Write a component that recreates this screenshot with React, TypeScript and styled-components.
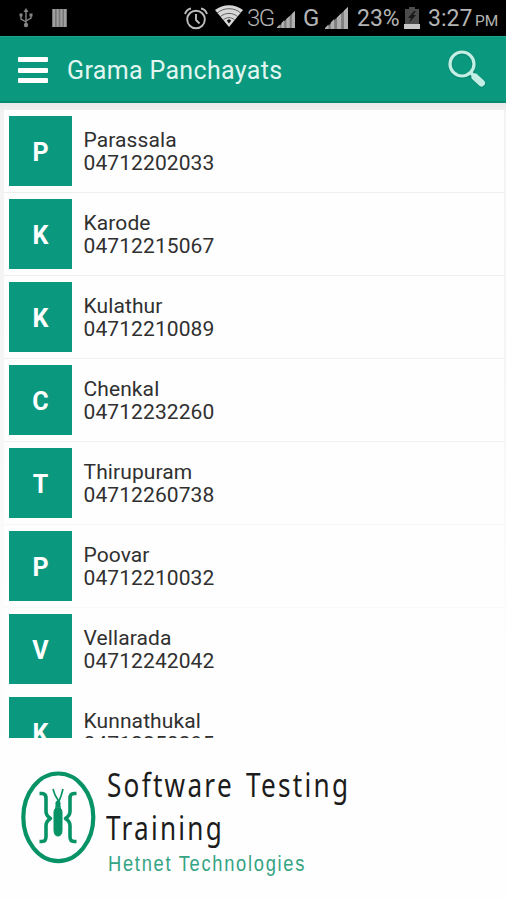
import React from 'react';
import styled, { createGlobalStyle } from 'styled-components';

const GREEN = '#0a997f';

const GlobalStyle = createGlobalStyle`
  * { box-sizing: border-box; }
  body { margin: 0; background: #fefefe; font-family: Roboto, sans-serif; }
  svg { display: block; flex: none; }
`;

const Screen = styled.main`
  width: 506px;
  height: 900px;
  overflow: hidden;
  display: flex;
  flex-direction: column;
  background: #fefefe;
`;

const StatusBar = styled.div`
  height: 36px;
  flex: none;
  display: flex;
  align-items: center;
  background: #000;
  color: #b4b4b4;
`;

const StatusItem = styled.span<{ $width: number; $gap: number; $size?: number; $light?: boolean; $drop?: number; $tracking?: number }>`
  flex: none;
  width: ${p => p.$width}px;
  margin-left: ${p => p.$gap}px;
  margin-top: ${p => p.$drop ?? 0}px;
  font-size: ${p => p.$size ?? 24}px;
  font-weight: ${p => (p.$light ? 300 : 400)};
  letter-spacing: ${p => p.$tracking ?? 0}px;
  line-height: 36px;
  white-space: nowrap;
`;

const AppBar = styled.header`
  height: 67px;
  flex: none;
  display: flex;
  align-items: center;
  padding: 2px 19px 0 18px;
  background: ${GREEN};
  border-top: 1px solid #16a68d;
  border-bottom: 2px solid #078970;
`;

const MenuButton = styled.button`
  width: 30px;
  height: 26px;
  padding: 0;
  border: 0;
  background: none;
  display: flex;
  flex-direction: column;
  justify-content: space-between;
`;

const MenuLine = styled.span`
  height: 5px;
  width: 30px;
  border-radius: 1px;
  background: #fff;
`;

const Title = styled.h1`
  margin: 1px auto 0 19px;
  font-size: 25px;
  font-weight: 400;
  letter-spacing: 0.35px;
  color: #e2f6f1;
`;

const ListPane = styled.section`
  height: 635px;
  flex: none;
  overflow: hidden;
  padding: 7px 2px 0 4px;
  background: linear-gradient(#e9e9e9 0, #f3f3f3 12px, #f4f4f4 220px, #fdfdfd 540px);
`;

const Row = styled.article<{ $divider: string }>`
  height: 83px;
  display: flex;
  align-items: flex-start;
  padding: 6px 5px 0;
  background: #fefefe;
  border-bottom: 1px solid ${p => p.$divider};
`;

const Initial = styled.div`
  width: 63px;
  height: 70px;
  flex: none;
  display: flex;
  align-items: center;
  justify-content: center;
  padding-top: 3px;
  background: ${GREEN};
  color: #fff;
  font-size: 25px;
  font-weight: 700;
`;

const Details = styled.div`
  margin: 13px 0 0 11.5px;
  color: #303030;
  line-height: 23px;
`;

const Name = styled.div`
  font-size: 21px;
  letter-spacing: 0.1px;
`;

const Phone = styled.div`
  font-size: 21px;
  letter-spacing: 0.1px;
`;

const Banner = styled.footer`
  flex: 1;
  display: flex;
  padding: 32px 0 0 20px;
  background: #fefefe;
`;

const BannerCopy = styled.div`
  margin: -7px 0 0 10px;
  white-space: nowrap;
`;

const Headline = styled.div<{ $indent: number }>`
  margin-left: ${p => p.$indent}px;
  height: 42.5px;
  line-height: 42px;
  font-family: "Noto Sans", sans-serif;
  font-size: 33.5px;
  font-weight: 400;
  letter-spacing: 2.9px;
  word-spacing: 4px;
  color: #1c1c1c;
  transform: scaleX(0.78);
  transform-origin: left;
`;

const Company = styled.div`
  margin: 2px 0 0 2px;
  line-height: 27px;
  font-family: "Liberation Sans", sans-serif;
  font-size: 22.5px;
  letter-spacing: 2.1px;
  color: #35a483;
  transform: scaleX(0.814);
  transform-origin: left;
`;

const UsbIcon = () => (
  <svg width="14" height="20" viewBox="0 0 14 20" fill="none" stroke="#858585" strokeWidth="1.4">
    <path d="M7 3v13M2 7v4l5 3M12 7v3l-5 3" />
    <path d="M4.5 4L7 0l2.5 4z" fill="#858585" stroke="none" />
    <circle cx="7" cy="17" r="2.2" fill="#858585" stroke="none" />
    <path d="M.5 5.5h3v3h-3zM10.5 5.5h3v3h-3z" fill="#858585" stroke="none" />
  </svg>
);

const StripesIcon = () => (
  <svg width="15" height="18" viewBox="0 0 15 18">
    <path fill="#777" d="M0 0h15v18H0z" />
    <path stroke="#a0a0a0" strokeWidth="2" d="M2 0v18M5.7 0v18M9.4 0v18M13 0v18" />
  </svg>
);

const AlarmIcon = () => (
  <svg width="24" height="23" viewBox="0 0 24 23" fill="none" stroke="#bcbcbc" strokeWidth="1.9">
    <circle cx="12" cy="12.5" r="8.8" />
    <path d="M12 7v6l3.5 3.5M1 7c1-3 3-5 6-5.5M17 1.5c3 .5 5 2.5 6 5.5" />
  </svg>
);

const WifiIcon = () => (
  <svg width="28" height="22" viewBox="0 0 28 22">
    <path fill="#d8d8d8" d="M0 5C8-1.5 20-1.5 28 5L14 22z" />
    <g fill="none" stroke="#606060" strokeWidth="1">
      <path d="M2 8.2c7-6 17-6 24 0M5 11.8c5.5-4.5 12.5-4.5 18 0M8.5 14.7c3.5-2.7 7.5-2.7 11 0" />
    </g>
    <path fill="#111" d="M11.8 15.5L14 14.3l2.2 1.2L14 18.6z" />
  </svg>
);

const SignalIcon = ({ width, height }: { width: number; height: number }) => (
  <svg width={width} height={height} viewBox="0 0 20 20" preserveAspectRatio="none">
    <path fill="#808080" d="M0 20L20 0v20z" />
    <path fill="#b0b0b0" d="M0 20v-1l3-3v4zM5 20v-6l3-3v9zM10.5 20V9.5l3.5-3.5V20zM16.500 20V3.500L20 0v20z" />
  </svg>
);

const BatteryIcon = () => (
  <svg width="16" height="22" viewBox="0 0 16 22">
    <path fill="#4b4b4b" d="M5 0h6v2h4v20H1V2h4z" />
    <path fill="#c8c8c8" d="M0 17h16v5H0z" />
    <path fill="#181818" d="M10 4L4 11h3l-2 5 7-8H9l3-4z" />
  </svg>
);

const SearchIcon = () => (
  <svg width="39" height="40" viewBox="0 0 39 40" fill="none">
    <g stroke="#08715e" strokeOpacity=".35">
      <circle cx="14" cy="14.5" r="12" strokeWidth="5" />
      <path d="M24 25l10 8.5" strokeWidth="8" strokeLinecap="round" />
    </g>
    <circle cx="14" cy="14" r="12" stroke="#c3eee4" strokeWidth="3.2" />
    <path d="M22 22l5 5" stroke="#c3eee4" strokeWidth="3.5" />
    <path d="M27 27l6.5 6" stroke="#c3eee4" strokeWidth="7" strokeLinecap="round" />
  </svg>
);

const BugLogo = () => (
  <svg width="76" height="94" viewBox="0 0 76 94" fill="none" stroke="#079366">
    <ellipse cx="38.3" cy="47.3" rx="35" ry="43.8" strokeWidth="4.2" />
    <g strokeWidth="3.6" strokeLinejoin="round">
      <path d="M19.5 23.5h2.5q4 0 4 5v13q0 4 4.5 7q-4.5 3-4.5 7v11q0 5-4 5h-2.5" />
      <path d="M56.5 23.5h-2.5q-4 0-4 5v13q0 4-4.5 7q4.5 3 4.5 7v11q0 5 4 5h2.5" />
    </g>
    <path d="M33 19l2 6 3 5v4l3-8 2-7M35 37h6" strokeWidth="1.7" />
    <ellipse cx="38" cy="34" rx="2.6" ry="3.5" fill="#079366" stroke="none" />
    <path d="M34 42q0-3 2-4h4q2 1 2 4v18q0 6-4 6t-4-6z" fill="#079366" />
  </svg>
);

const contacts = [
  { name: 'Parassala', phone: '04712202033', divider: '#eeeeee' },
  { name: 'Karode', phone: '04712215067', divider: '#eeeeee' },
  { name: 'Kulathur', phone: '04712210089', divider: '#f0f0f0' },
  { name: 'Chenkal', phone: '04712232260', divider: '#f2f2f2' },
  { name: 'Thirupuram', phone: '04712260738', divider: '#f6f6f6' },
  { name: 'Poovar', phone: '04712210032', divider: '#f9f9f9' },
  { name: 'Vellarada', phone: '04712242042', divider: '#fcfcfc' },
  { name: 'Kunnathukal', phone: '04712250295', divider: '#fdfdfd' },
];

export default function App() {
  return (
    <>
      <GlobalStyle />
      <Screen>
        <StatusBar>
          <StatusItem $width={14} $gap={19}><UsbIcon /></StatusItem>
          <StatusItem $width={15} $gap={19}><StripesIcon /></StatusItem>
          <StatusItem $width={24} $gap={117}><AlarmIcon /></StatusItem>
          <StatusItem $width={28} $gap={7} $drop={-4}><WifiIcon /></StatusItem>
          <StatusItem $width={28} $gap={4} $light $tracking={-1.5}>3G</StatusItem>
          <StatusItem $width={18} $gap={2} $drop={2}><SignalIcon width={18} height={17} /></StatusItem>
          <StatusItem $width={19} $gap={8}>G</StatusItem>
          <StatusItem $width={23} $gap={3} $drop={-1}><SignalIcon width={23} height={22} /></StatusItem>
          <StatusItem $width={44} $gap={9} $drop={2} $size={23}>23%</StatusItem>
          <StatusItem $width={16} $gap={3} $drop={-1}><BatteryIcon /></StatusItem>
          <StatusItem $width={44} $gap={8} $drop={2} $size={23}>3:27</StatusItem>
          <StatusItem $width={26} $gap={3} $drop={5} $size={15.5}>PM</StatusItem>
        </StatusBar>
        <AppBar>
          <MenuButton aria-label="Menu"><MenuLine /><MenuLine /><MenuLine /></MenuButton>
          <Title>Grama Panchayats</Title>
          <SearchIcon />
        </AppBar>
        <ListPane>
          {contacts.map(c => (
            <Row key={c.name} $divider={c.divider}>
              <Initial>{c.name[0]}</Initial>
              <Details>
                <Name>{c.name}</Name>
                <Phone>{c.phone}</Phone>
              </Details>
            </Row>
          ))}
        </ListPane>
        <Banner>
          <BugLogo />
          <BannerCopy>
            <Headline $indent={1}>Software Testing</Headline>
            <Headline $indent={0}>Training</Headline>
            <Company>Hetnet Technologies</Company>
          </BannerCopy>
        </Banner>
      </Screen>
    </>
  );
}
